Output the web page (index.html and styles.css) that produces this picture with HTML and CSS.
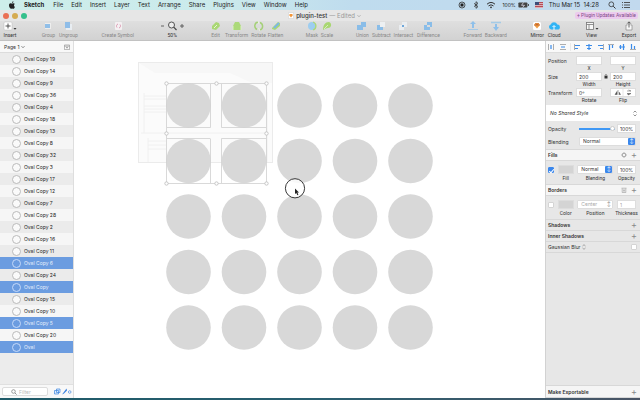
FILE: index.html
```html
<!DOCTYPE html>
<html lang="en">
<head>
<meta charset="utf-8">
<title>plugin-test</title>
<link rel="stylesheet" href="styles.css">
</head>
<body>
<nav class="menubar">
  <svg class="apple" viewBox="0 0 8 8" width="8" height="8"><path d="M5.6 2.2C4.9 2.2 4.5 2.6 4.1 2.6 3.7 2.6 3.3 2.2 2.6 2.2 1.6 2.2 1 3.1 1 4.3 1 6 2 7.7 2.9 7.7c.4 0 .7-.3 1.2-.3s.8.3 1.2.3c.7 0 1.3-1 1.6-1.8-1.2-.6-1.2-2.300-.1-2.900-.3-.5-.7-.8-1.200-.8zM4 2c0-1 .6-1.600 1.400-1.700C5.500 1.200 4.900 1.900 4 2z" fill="#222"/></svg>
  <ul class="menus">
    <li class="app">Sketch</li><li>File</li><li>Edit</li><li>Insert</li><li>Layer</li><li>Text</li><li>Arrange</li><li>Share</li><li>Plugins</li><li>View</li><li>Window</li><li>Help</li>
  </ul>
  <div class="status">
    <svg viewBox="0 0 8 8" width="8" height="8"><circle cx="4" cy="4" r="3" fill="none" stroke="#333" stroke-width=".8"/><rect x="2.500" y="2.500" width="3" height="3" fill="#222"/></svg>
    <svg viewBox="0 0 8 8" width="8" height="8"><path d="M2 2.300l4 3.300L4 7.300V.7l2 1.700L2 5.700" fill="none" stroke="#333" stroke-width=".8"/></svg>
    <svg viewBox="0 0 10 8" width="10" height="8"><path d="M1 3.200q4-3.500 8 0M2.500 4.900q2.500-2.200 5 0" fill="none" stroke="#333"/><circle cx="5" cy="6.300" r=".9" fill="#333"/></svg>
    <span class="charge">100%<svg viewBox="0 0 11 6" width="11" height="6"><rect x=".4" y=".4" width="9" height="5.200" rx=".8" fill="#444"/><path d="M10.400 2v2" stroke="#444"/><path d="M5.500.5L3.500 3.300h3L4.500 5.500" stroke="#dde" stroke-width=".8" fill="none"/></svg></span>
    <svg viewBox="0 0 8 6" width="8" height="6"><path d="M0 0h8v6H0z" fill="#dbaeb4"/><path d="M0 .5h8M0 2.500h8M0 4.500h8" stroke="#b54b58"/><path d="M0 0h4v3H0z" fill="#3d4c78"/></svg>
    <time>Thu Mar 15&nbsp; 14:28</time>
    <svg viewBox="0 0 8 8" width="8" height="8"><circle cx="3.300" cy="3.300" r="2.400" fill="none" stroke="#333" stroke-width=".8"/><path d="M5.200 5.200L7.500 7.500" stroke="#333"/></svg>
    <svg viewBox="0 0 8 8" width="8" height="8"><path d="M0 1.500h1M2 1.500h6M0 4h1M2 4h6M0 6.500h1M2 6.500h6" stroke="#444" stroke-width=".9"/></svg>
  </div>
</nav>
<header class="titlebar">
  <div class="lights"><i class="close"></i><i class="min"></i><i class="max"></i></div>
  <h1><svg viewBox="0 0 6 7" width="6" height="7"><path d="M.5.500h5v6h-5z" fill="#fff" stroke="#ccc" stroke-width=".5"/><path d="M1 3l1-1h2l1 1-2 2.500z" fill="#f2963a"/></svg>plugin-test <span>— Edited</span><svg viewBox="0 0 4 4" width="4" height="4"><path d="M.5 1.200L2 2.700 3.500 1.200" fill="none" stroke="#999" stroke-width=".7"/></svg></h1>
  <a class="updates" href="#">+ Plugin Updates Available</a>
</header>
<div class="toolbar">
  <div class="group">
    <button class="w16 on"><svg viewBox="0 0 14 10" width="14" height="10"><rect x="1" y="1" width="8" height="8" rx="1" fill="#fff" stroke="#bbb" stroke-width=".5"/><path d="M5 2.500v5M2.500 5h5" stroke="#444" stroke-width=".9"/><path d="M10.500 7h3L12 8.800z" fill="#333"/></svg>Insert</button>
  </div>
  <div class="group">
    <button class="w20"><svg viewBox="0 0 10 10" width="10" height="10"><path d="M2 2h6v6H2z" fill="#fff" opacity=".5"/><path d="M2 3h5v4H2z" fill="#91bfe8"/></svg>Group</button>
    <button class="w20"><svg viewBox="0 0 10 10" width="10" height="10"><path d="M3 3h6v6H3z" fill="#e8edf2"/><path d="M2 1h5v6H2z" fill="#8fbde8"/></svg>Ungroup</button>
  </div>
  <div class="group">
    <button class="w38"><svg viewBox="0 0 10 10" width="10" height="10"><rect x="2" y="1" width="7" height="8" rx="1" fill="#f4f0f2"/><path d="M4 6.500A2.200 2.200 0 0 1 5 3M7 3.500A2.200 2.200 0 0 1 6 7" stroke="#d892ac" fill="none" stroke-width=".9"/></svg>Create Symbol</button>
  </div>
  <div class="group">
    <button class="w30 on"><svg viewBox="0 0 24 10" width="24" height="10"><path d="M1 5h3M20 5h4M22 3v4" stroke="#555" stroke-width=".9"/><circle cx="11.500" cy="4" r="3" fill="#eee" stroke="#444" stroke-width=".9"/><path d="M13.700 6.200L16.500 9" stroke="#444" stroke-width="1.200"/></svg>50%</button>
  </div>
  <div class="group">
    <button class="w16"><svg viewBox="0 0 10 10" width="10" height="10"><path d="M1 8V5l4-4 3 1 1 3-4 4z" fill="#aad775"/><path d="M3 7l3-3" stroke="#e8f6d5"/></svg>Edit</button>
    <button class="w26"><svg viewBox="0 0 10 10" width="10" height="10"><path d="M1 9V5l2-4h4l2 4v4z" fill="#acd979"/><path d="M1 9V5M9 9V5" stroke="#dcefc5"/></svg>Transform</button>
    <button class="w18"><svg viewBox="0 0 10 10" width="10" height="10"><path d="M4 1A4 4 0 0 0 3 8.500M6 1.500A4 4 0 0 1 6 9" fill="none" stroke="#a5d078" stroke-width="1.500"/><path d="M4 0l1 3M6 10L4.500 7" stroke="#e9f2e0"/></svg>Rotate</button>
    <button class="w16"><svg viewBox="0 0 10 10" width="10" height="10"><path d="M1 7l6-6 2 1v3L4 9 1 8z" fill="#a9d872"/><path d="M3 7l5-5" stroke="#7db6e6" stroke-width="2"/></svg>Flatten</button>
  </div>
  <div class="group">
    <button class="w16"><svg viewBox="0 0 10 10" width="10" height="10"><circle cx="5" cy="5" r="4" fill="#9dcdf0"/><path d="M6 1a4.200 4.200 0 0 1 0 8" fill="none" stroke="#acd879" stroke-width="1.300"/></svg>Mask</button>
    <button class="w14"><svg viewBox="0 0 10 10" width="10" height="10"><path d="M1 9c0-5 2-8 6-8 3 1 3 6-1 6-2 0-3 1-5 2z" fill="#a9d772"/><path d="M2 8l4-4" stroke="#d7edbc"/></svg>Scale</button>
  </div>
  <div class="group">
    <button class="w16"><svg viewBox="0 0 10 10" width="10" height="10"><path d="M4 1h5v5H6v3H0V4h4z" fill="#8abde8"/></svg>Union</button>
    <button class="w22"><svg viewBox="0 0 10 10" width="10" height="10"><path d="M4 1h5v5H4z" fill="#edf0f2"/><path d="M1 4h3v2h3v3H1z" fill="#8abde8"/></svg>Subtract</button>
    <button class="w22"><svg viewBox="0 0 10 10" width="10" height="10"><path d="M4 1h5v5H4zM1 4h5v5H1z" fill="#eaedf0"/><path d="M4 4h2v2H4z" fill="#6fa7d9"/></svg>Intersect</button>
    <button class="w28"><svg viewBox="0 0 10 10" width="10" height="10"><path d="M4 1h5v5H7V4H4zM1 4h3v2h3v3H1z" fill="#8abde8"/></svg>Difference</button>
  </div>
  <div class="group">
    <button class="w20"><svg viewBox="0 0 10 10" width="10" height="10"><path d="M5 0l3 3H6v4H4V3H2z" fill="#8fc0ea"/><path d="M0 8.500h3M7 8.500h3M3 8.500h4" stroke="#a5c9e6"/></svg>Forward</button>
    <button class="w26"><svg viewBox="0 0 10 10" width="10" height="10"><path d="M5 10L2 6h2V3h2v3h2z" fill="#8fc0ea"/><path d="M0 1.500h10" stroke="#a5cbe6" stroke-width="1.500"/></svg>Backward</button>
  </div>
  <div class="group">
    <button class="w16 on"><svg viewBox="0 0 10 10" width="10" height="10"><rect x="1" y="1" width="8" height="8" rx="1.500" fill="#fff"/><path d="M2 4l1.500-2h3L8 4 5 7.500z" fill="#ee9b41"/><path d="M3.500 2L5 4l1.500-2M2 4h6" stroke="#b3542c" stroke-width=".6" fill="none"/></svg>Mirror</button>
    <button class="w18 on"><svg viewBox="0 0 12 10" width="12" height="10"><path d="M3 8.500a2.600 2.600 0 0 1-.3-5A3.600 3.600 0 0 1 9.300 3.500 2.500 2.500 0 0 1 9.500 8.500z" fill="#31b4f5"/><path d="M6 9V5M4.500 6L6 4.500 7.500 6" stroke="#fff" fill="none" stroke-width=".9"/></svg>Cloud</button>
  </div>
  <div class="group">
    <button class="w16 on"><svg viewBox="0 0 14 10" width="14" height="10"><rect x="1.500" y="1.500" width="7" height="7" fill="#f7f7f7" stroke="#777" stroke-width=".8"/><path d="M1.500 3.500h7M4 3.500v5" stroke="#777" stroke-width=".8"/><path d="M10.500 7h3L12 8.800z" fill="#333"/></svg>View</button>
  </div>
  <div class="group">
    <button class="w18 on"><svg viewBox="0 0 10 10" width="10" height="10"><path d="M3.500 4H2v5h6V4H6.500" fill="#f7f7f7" stroke="#888" stroke-width=".7"/><path d="M5 6.500V1M3.300 2.500L5 .8l1.700 1.700" fill="none" stroke="#444" stroke-width=".8"/></svg>Export</button>
  </div>
</div>
<main class="workspace">
  <aside class="layers">
    <div class="pages"><button>Page 1 <svg viewBox="0 0 4 4" width="4" height="4"><path d="M.5 1.200L2 2.700 3.500 1.200" fill="none" stroke="#555" stroke-width=".7"/></svg></button><svg viewBox="0 0 6 6" width="6" height="6"><path d="M.4 1h5.200v4.600H.4zM.4 2.200h5.200" fill="none" stroke="#888" stroke-width=".6"/><path d="M2 3.300h2L3 4.600z" fill="#666"/></svg></div>
    <ul>
      <li>Oval Copy 19</li><li>Oval Copy 14</li><li>Oval Copy 9</li><li>Oval Copy 36</li><li>Oval Copy 4</li>
      <li>Oval Copy 18</li><li>Oval Copy 13</li><li>Oval Copy 8</li><li>Oval Copy 32</li><li>Oval Copy 3</li>
      <li>Oval Copy 17</li><li>Oval Copy 12</li><li>Oval Copy 7</li><li>Oval Copy 28</li><li>Oval Copy 2</li>
      <li>Oval Copy 16</li><li>Oval Copy 11</li><li class="sel">Oval Copy 6</li><li>Oval Copy 24</li><li class="sel">Oval Copy</li>
      <li>Oval Copy 15</li><li>Oval Copy 10</li><li class="sel">Oval Copy 5</li><li>Oval Copy 20</li><li class="sel">Oval</li>
    </ul>
    <footer class="filter">
      <label><svg viewBox="0 0 6 6" width="6" height="6"><circle cx="2.500" cy="2.500" r="1.800" fill="none" stroke="#777" stroke-width=".7"/><path d="M4 4l1.600 1.600" stroke="#777" stroke-width=".8"/></svg><input type="text" placeholder="Filter" aria-label="Filter"></label>
      <svg viewBox="0 0 18 7" width="18" height="7"><path d="M2.500 1h3.500v3.500H2.500zM.5 2.500h4V6h-4z" fill="#dcebfb" stroke="#3f86e0" stroke-width=".7"/><path d="M8 6.500L12.500.500 13 2.500 10 5.500z" fill="#3a82e0"/><circle cx="15.700" cy="4" r="1.300" fill="none" stroke="#4a8de0" stroke-width=".7"/></svg>
    </footer>
  </aside>
  <section class="canvas">
    <svg viewBox="73 41 472 357" width="472" height="357">
      <rect x="138.500" y="62.500" width="134" height="100" fill="#fbfbfb" stroke="#ebebeb"/>
      <path d="M139 63h133v20h-20L230 73H155z" fill="#f7f7f7"/>
      <path d="M144 96h22M144 99h22M144 106h22M144 109h22M144 112h22M141 133h126M148 141h18M148 145h18M148 149h18M144 93v40M148 138v24M267 92v70" stroke="#f0f0f0" fill="none"/>
      <g fill="#d8d8d8" id="ovals">
        <circle cx="188.500" cy="105.500" r="22.300"/><circle cx="244" cy="105.500" r="22.300"/><circle cx="299.500" cy="105.500" r="22.300"/><circle cx="355" cy="105.500" r="22.300"/><circle cx="410.500" cy="105.500" r="22.300"/>
        <circle cx="188.500" cy="161" r="22.300"/><circle cx="244" cy="161" r="22.300"/><circle cx="299.500" cy="161" r="22.300"/><circle cx="355" cy="161" r="22.300"/><circle cx="410.500" cy="161" r="22.300"/>
        <circle cx="188.500" cy="216.500" r="22.300"/><circle cx="244" cy="216.500" r="22.300"/><circle cx="299.500" cy="216.500" r="22.300"/><circle cx="355" cy="216.500" r="22.300"/><circle cx="410.500" cy="216.500" r="22.300"/>
        <circle cx="188.500" cy="272" r="22.300"/><circle cx="244" cy="272" r="22.300"/><circle cx="299.500" cy="272" r="22.300"/><circle cx="355" cy="272" r="22.300"/><circle cx="410.500" cy="272" r="22.300"/>
        <circle cx="188.500" cy="327.500" r="22.300"/><circle cx="244" cy="327.500" r="22.300"/><circle cx="299.500" cy="327.500" r="22.300"/><circle cx="355" cy="327.500" r="22.300"/><circle cx="410.500" cy="327.500" r="22.300"/>
      </g>
      <path d="M166.500 83.500h100v100h-100zM210.500 84v43.500H167M221.500 84v43.500H266M210.500 183v-44M167 138.500h43.500M221.500 183v-44.500H266" fill="none" stroke="#cfcfcf" stroke-width=".8"/>
      <g fill="#fff" stroke="#bbb" stroke-width=".8"><circle cx="166.500" cy="83.500" r="1.700"/><circle cx="216.500" cy="83.500" r="1.700"/><circle cx="266.500" cy="83.500" r="1.700"/><circle cx="166.500" cy="133.500" r="1.700"/><circle cx="266.500" cy="133.500" r="1.700"/><circle cx="166.500" cy="183.500" r="1.700"/><circle cx="216.500" cy="183.500" r="1.700"/><circle cx="266.500" cy="183.500" r="1.700"/></g>
      <circle cx="295" cy="188.300" r="9.600" fill="#fff" fill-opacity=".85" stroke="#222" stroke-width=".9"/>
      <path d="M295 188.500v5.500l1.300-1.100 1.100 2.300 1-.5-1.100-2.200h1.700z" fill="#222"/>
    </svg>
  </section>
  <aside class="inspector">
    <div class="align">
      <svg viewBox="0 0 88 8" width="88" height="8"><path d="M.5 1v6M5.500 1v6M12 1.500h6M12 6.500h6M26.500 1v6M55.500 1v6M60 1.500h6M82 6.500h6" stroke="#999" stroke-width=".8"/><path d="M3 2v4M13 4h4M27 2.500h5M27 5.500h3M38 2.500h6M39 5.500h4M41 1v6M50 2.500h5M52 5.500h3M61.500 2v5M64.500 2v3M71 4h6M72.500 2v4M75.500 1v6M83.500 1v5M86.500 3v3" stroke="#3b8cea" stroke-width="1.200"/><path d="M22.500 0v8" stroke="#ddd" stroke-width=".6"/></svg>
    </div>
    <div class="geometry">
      <span>Position</span><input id="x" type="text"><i></i><input id="y" type="text">
      <label class="c2" for="x">X</label><label class="c4" for="y">Y</label>
      <span>Size</span><input id="w" type="text" value="200"><svg viewBox="0 0 4 5" width="4" height="5"><path d="M.5 2h3v2.500h-3z" fill="#333"/><path d="M1 2V1.200q1-1.200 2 0V2" fill="none" stroke="#333" stroke-width=".6"/></svg><input id="h" type="text" value="200">
      <label class="c2" for="w">Width</label><label class="c4" for="h">Height</label>
      <span>Transform</span><input id="r" type="text" value="0º"><i></i><button id="f" class="flip" aria-label="Flip"><svg viewBox="0 0 26 9" width="26" height="9"><path d="M13 0v9" stroke="#ddd" stroke-width=".7"/><path d="M5 6.500h2v-3zM8 2v5M9 6.500h1.500L9 4M17 3h4M17 5.500h4L18 7M18.500 2L21 3" fill="#555" stroke="#555" stroke-width=".5"/></svg></button>
      <label class="c2" for="r">Rotate</label><label class="c4" for="f">Flip</label>
    </div>
    <button class="shared"><em>No Shared Style</em><svg viewBox="0 0 4 7" width="4" height="7"><path d="M.5 2.500L2 1l1.500 1.500M.5 4.500L2 6l1.500-1.500" fill="none" stroke="#666" stroke-width=".7"/></svg></button>
    <div class="appearance">
      <label for="op">Opacity</label><input class="slider" id="op" type="range" value="100"><input type="text" value="100%" aria-label="Opacity value">
      <label for="bl">Blending</label><div class="pick wide"><select id="bl"><option>Normal</option></select></div>
    </div>
    <div class="head light"><b>Fills</b><svg viewBox="0 0 6 6" width="6" height="6"><circle cx="3" cy="3" r="1.700" fill="none" stroke="#999" stroke-width=".8"/><path d="M3 0v1M3 5v1M0 3h1M5 3h1M1 1l.6.6M4.400 4.400l.6.6M5 1l-.6.6M1.600 4.400L1 5" stroke="#999" stroke-width=".7"/></svg><button aria-label="Add fill">+</button></div>
    <div class="paint">
      <input type="checkbox" id="fe" checked aria-label="Enable fill"><button id="fc" class="swatch" aria-label="Fill"></button><div class="pick"><select id="fb"><option>Normal</option></select></div><input id="fo" type="text" value="100%">
      <label class="c2" for="fc">Fill</label><label for="fb">Blending</label><label for="fo">Opacity</label>
    </div>
    <div class="head light"><b>Borders</b><svg viewBox="0 0 6 6" width="6" height="6"><path d="M.5 1.200h5M1.200 1.500v4h3.600v-4M2.500 2.500v2M3.500 2.500v2" fill="none" stroke="#999" stroke-width=".6"/></svg><button aria-label="Add border">+</button></div>
    <div class="paint off">
      <input type="checkbox" id="be" aria-label="Enable border"><button id="bc" class="swatch" aria-label="Color"></button><div class="pick"><select id="bp"><option>Center</option></select></div><input id="bt" type="text" value="1">
      <label class="c2" for="bc">Color</label><label for="bp">Position</label><label for="bt">Thickness</label>
    </div>
    <div class="head"><b>Shadows</b><button aria-label="Add shadow">+</button></div>
    <div class="head"><b>Inner Shadows</b><button aria-label="Add inner shadow">+</button></div>
    <div class="head blur"><label for="gb">Gaussian Blur <svg viewBox="0 0 4 6" width="4" height="6"><path d="M.5 2L2 .7 3.500 2M.5 4L2 5.300 3.500 4" fill="none" stroke="#777" stroke-width=".6"/></svg></label><input type="checkbox" id="gb"></div>
    <div class="head light export"><b>Make Exportable</b><button aria-label="Make exportable">+</button></div>
  </aside>
</main>
<div class="desktop"></div>
</body>
</html>
```
FILE: styles.css
```css
* { box-sizing: border-box; margin: 0; padding: 0; }
body {
  height: 100vh;
  display: flex;
  flex-direction: column;
  overflow: hidden;
  background: #fff;
  color: #333;
  font: 5px/8px Inter, "Liberation Sans", sans-serif;
}
button, input, select { font: inherit; color: inherit; border: 0; background: none; appearance: none; border-radius: 0; min-width: 0; outline: 0; }
svg { flex: none; display: block; }
ul { list-style: none; }

.menubar {
  height: 10px;
  flex: none;
  display: flex;
  align-items: center;
  padding: 0 10px 0 8px;
  background: linear-gradient(90deg, #cdeeea, #cbeaec 35%, #bfdcee 55%, #c2d9ee);
  font-size: 6px;
  color: #222;
}
.menus { display: flex; gap: 8px; margin-left: 8px; }
.menus .app { font-weight: 700; margin-right: 1px; }
.status { display: flex; align-items: center; gap: 6px; margin-left: auto; white-space: nowrap; }
.status time { margin-right: 3px; }
.charge { display: flex; align-items: center; gap: 2px; font-size: 5px; }

.titlebar {
  height: 11px;
  flex: none;
  display: grid;
  grid-template-columns: 1fr auto 1fr;
  align-items: center;
  padding: 0 2px 0 3px;
  background: #e6e6e6;
}
.lights { display: flex; gap: 3px; }
.lights i { width: 6px; height: 6px; border-radius: 50%; }
.close { background: #ea6f54; }
.min { background: #d5ab50; }
.max { background: #36c08c; }
h1 { display: flex; align-items: center; gap: 2px; margin-left: 8px; font-size: 6px; font-weight: 500; }
h1 span { color: #999; font-weight: 400; }
.updates { justify-self: end; padding: 0 2px; border-radius: 2px; background: #eccbee; color: #7d4a86; font: 5px/7px Roboto, sans-serif; text-decoration: none; }

.toolbar {
  height: 20px;
  flex: none;
  display: flex;
  justify-content: space-between;
  padding: 0 2px;
  background: linear-gradient(#dfdfdf, #d2d2d2);
  border-bottom: 1px solid #c2c2c2;
}
.group { display: flex; }
.group button { display: flex; flex-direction: column; align-items: center; font: 5px/9px Roboto, sans-serif; color: #888; white-space: nowrap; }
.group .on { color: #333; }
.w14 { width: 14px; }
.w16 { width: 16px; }
.w18 { width: 18px; }
.w20 { width: 20px; }
.w22 { width: 22px; }
.w26 { width: 26px; }
.w28 { width: 28px; }
.w30 { width: 30px; }
.w38 { width: 38px; }

.workspace { flex: 1; min-height: 0; display: grid; grid-template-columns: 74px 1fr 95px; }
.layers { display: flex; flex-direction: column; min-height: 0; background: #ececec; border-right: 1px solid #dedede; }
.pages { height: 12px; display: flex; align-items: center; justify-content: space-between; padding: 0 3px 0 4px; background: #f8f8f8; border-bottom: 1px solid #dcdcdc; }
.pages button { display: flex; align-items: center; gap: 2px; }
.layers li { height: 12px; display: flex; align-items: center; gap: 3px; padding-left: 12px; background: #ebebeb; color: #222; }
.layers li:nth-child(even) { background: #f6f6f6; }
.layers li::before { content: ""; width: 7px; height: 7px; border: 1px solid #bbb; border-radius: 50%; background: #fafafa; }
.layers li.sel { background: #6b9ce0; color: #e6effc; }
.layers li.sel::before { border-color: #c6dafa; background: none; }
.filter { margin-top: auto; height: 14px; display: flex; align-items: center; justify-content: space-between; padding: 0 1px 0 2px; background: #f8f8f8; border-top: 1px solid #e0e0e0; }
.filter label { display: flex; align-items: center; gap: 2px; width: 46px; height: 9px; padding-left: 8px; background: #fff; border: 1px solid #ddd; border-radius: 2px; }
.filter input { width: 28px; }
::placeholder { color: #bbb; }

.canvas { overflow: hidden; min-width: 0; background: #fff; }
.canvas svg { margin-left: -1px; }

.inspector { display: flex; flex-direction: column; background: #e7e7e7; border-left: 1px solid #d2d2d2; color: #333; white-space: nowrap; }
.align { height: 12px; flex: none; display: flex; align-items: center; padding-left: 2px; background: #f9f9f9; border-bottom: 1px solid #ddd; }
.geometry, .appearance, .paint { display: grid; align-items: center; padding: 3px 4px 0 2px; }
.geometry { grid-template-columns: 28px 1fr 8px 1fr; grid-auto-rows: 9px 7px; padding-bottom: 1px; }
.geometry > svg { justify-self: center; }
.geometry label, .paint label { font: 5px/7px Roboto, sans-serif; text-align: center; justify-self: center; }
.c2 { grid-column: 2; }
.c4 { grid-column: 4; }
input[type="text"], .flip, .pick, .swatch { height: 9px; }
.inspector input[type="text"], .flip { width: 100%; padding: 0 2px; background: #fff; border: 1px solid #ddd; }
.inspector .flip { padding: 0; display: flex; align-items: center; justify-content: center; overflow: hidden; }
.shared { height: 16px; flex: none; display: flex; align-items: center; justify-content: space-between; padding: 0 3px 0 4px; background: #fff; }
.appearance { grid-template-columns: 29px 1fr 19px; column-gap: 2px; grid-auto-rows: 9px; row-gap: 4px; padding-bottom: 3px; border-bottom: 1px solid #d8d8d8; }
.appearance .wide { grid-column: 2 / 4; }
.slider { height: 6px; width: 100%; background: linear-gradient(#3f98f5, #3f98f5) center / 100% 2px no-repeat; }
.slider::-webkit-slider-thumb { appearance: none; width: 5px; height: 5px; border-radius: 50%; background: #fff; border: 1px solid #ccc; }
.pick { display: flex; background: #fff; border: 1px solid #ddd; border-radius: 1px; }
.pick select { flex: 1; line-height: 7px; padding-left: 3px; }
.pick::after { content: "\2195"; width: 7px; background: #3b87ec; color: #fff; border-radius: 1px; text-align: center; line-height: 7px; font-size: 5px; }
.head { height: 11px; flex: none; display: flex; align-items: center; gap: 4px; padding: 0 3px 0 2px; border-bottom: 1px solid #d8d8d8; }
.light { background: #f5f5f5; }
.head b { font-weight: 600; margin-right: auto; }
.head button { width: 6px; font-size: 9px; line-height: 8px; color: #888; }
.paint { grid-template-columns: 6px 16px 36px 19px; justify-content: space-between; grid-template-rows: 9px 8px; padding: 4px 4px 2px 2px; border-bottom: 1px solid #d8d8d8; }
.swatch { background: #d4d4d4; border: 1px solid #fff; outline: 1px solid #ddd; outline-offset: -1px; }
input[type="checkbox"] { width: 6px; height: 6px; background: #fff; border: 1px solid #d4d4d4; border-radius: 1px; }
input[type="checkbox"]:checked { background: #3b87ec; border-color: #3b87ec; }
input[type="checkbox"]:checked::after { content: ""; display: block; width: 2px; height: 4px; margin-left: 1px; border: solid #fff; border-width: 0 1px 1px 0; transform: rotate(40deg); }
.off select, .off input { color: #aaa; }
.off .pick::after { background: #fff; color: #888; }
.blur { justify-content: space-between; }
.blur label { display: flex; align-items: center; gap: 2px; }
.export { margin-top: auto; border-top: 1px solid #d8d8d8; height: 13px; }
.desktop { height: 2px; flex: none; background: linear-gradient(90deg, #1e5a68, #2a5f70 50%, #4a5566); }
```
